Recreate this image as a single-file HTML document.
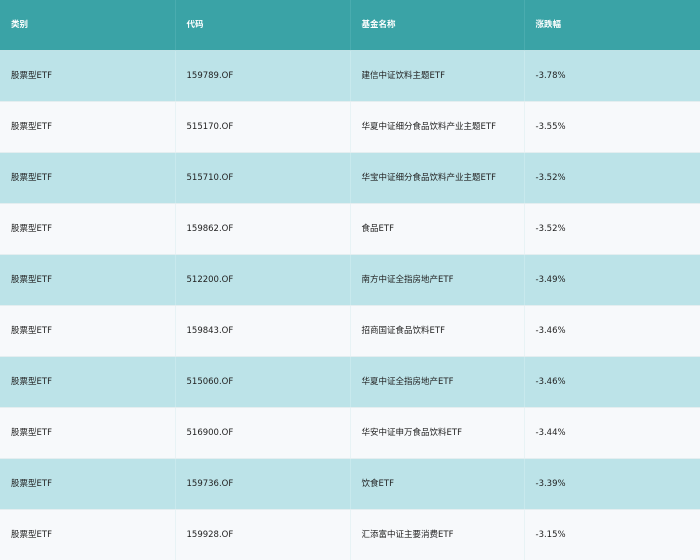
<!DOCTYPE html>
<html><head><meta charset="utf-8"><style>
html,body{margin:0;padding:0;width:700px;height:560px;overflow:hidden;background:#f7f9fb;}
table{border-collapse:collapse;width:700px;table-layout:fixed;font-family:"DejaVu Sans","Noto Sans CJK SC",sans-serif;font-size:8.5px;color:#222;}
td,th{padding:0 0 0 11px;text-align:left;border-right:1px solid #e8f3f5;border-bottom:1px solid #e4eef0;height:50px;white-space:nowrap;line-height:12px;vertical-align:middle;}
td span,th span{display:inline-block;height:12px;line-height:12px;vertical-align:middle;}
td:last-child,th:last-child{border-right:none;}
th{background:#3aa3a6;color:#fff;font-weight:bold;height:50px;border-right:1px solid #4aacaf;border-bottom:1px solid #bfe2e6;}
tr.a td{background:#bce3e8;border-right-color:#c8e9ed;}
tr.b td{background:#f7f9fb;}
</style></head><body>
<table>
<colgroup><col style="width:175px"><col style="width:175px"><col style="width:174px"><col style="width:176px"></colgroup>
<tr><th><span>类别</span></th><th><span>代码</span></th><th><span>基金名称</span></th><th><span>涨跌幅</span></th></tr>
<tr class="a"><td><span>股票型ETF</span></td><td><span>159789.OF</span></td><td><span>建信中证饮料主题ETF</span></td><td><span>-3.78%</span></td></tr>
<tr class="b"><td><span>股票型ETF</span></td><td><span>515170.OF</span></td><td><span>华夏中证细分食品饮料产业主题ETF</span></td><td><span>-3.55%</span></td></tr>
<tr class="a"><td><span>股票型ETF</span></td><td><span>515710.OF</span></td><td><span>华宝中证细分食品饮料产业主题ETF</span></td><td><span>-3.52%</span></td></tr>
<tr class="b"><td><span>股票型ETF</span></td><td><span>159862.OF</span></td><td><span>食品ETF</span></td><td><span>-3.52%</span></td></tr>
<tr class="a"><td><span>股票型ETF</span></td><td><span>512200.OF</span></td><td><span>南方中证全指房地产ETF</span></td><td><span>-3.49%</span></td></tr>
<tr class="b"><td><span>股票型ETF</span></td><td><span>159843.OF</span></td><td><span>招商国证食品饮料ETF</span></td><td><span>-3.46%</span></td></tr>
<tr class="a"><td><span>股票型ETF</span></td><td><span>515060.OF</span></td><td><span>华夏中证全指房地产ETF</span></td><td><span>-3.46%</span></td></tr>
<tr class="b"><td><span>股票型ETF</span></td><td><span>516900.OF</span></td><td><span>华安中证申万食品饮料ETF</span></td><td><span>-3.44%</span></td></tr>
<tr class="a"><td><span>股票型ETF</span></td><td><span>159736.OF</span></td><td><span>饮食ETF</span></td><td><span>-3.39%</span></td></tr>
<tr class="b"><td><span>股票型ETF</span></td><td><span>159928.OF</span></td><td><span>汇添富中证主要消费ETF</span></td><td><span>-3.15%</span></td></tr>
</table>
</body></html>
